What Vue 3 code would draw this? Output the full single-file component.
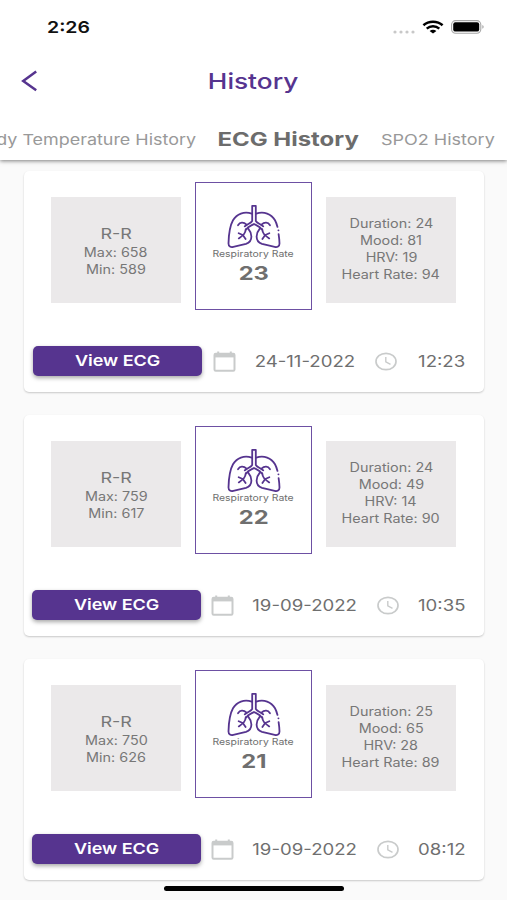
<script setup>
const records = [
  { id: 1, max: 658, min: 589, rate: 23, duration: 24, mood: 81, hrv: 19, heart: 94, date: '24-11-2022', time: '12:23' },
  { id: 2, max: 759, min: 617, rate: 22, duration: 24, mood: 49, hrv: 14, heart: 90, date: '19-09-2022', time: '10:35' },
  { id: 3, max: 750, min: 626, rate: 21, duration: 25, mood: 65, hrv: 28, heart: 89, date: '19-09-2022', time: '08:12' },
]
</script>

<template>
  <div class="screen">
    <header class="top">
      <div class="status">
        <span class="clock wide">2:26</span>
        <div class="signals">
          <svg class="dots" width="24" height="4" viewBox="0 0 24 4"><g fill="#c8c8c8"><circle cx="3" cy="2" r="1.6" /><circle cx="9" cy="2" r="1.6" /><circle cx="15" cy="2" r="1.6" /><circle cx="21" cy="2" r="1.6" /></g></svg>
          <svg class="wifi" width="22" height="14" viewBox="0 0 22 14" fill="none" stroke="#000" stroke-width="2.5">
            <path d="M1.4 5.2C6.7.5 15.3.5 20.6 5.2" />
            <path d="M4.7 8.6c3.6-3.1 9-3.1 12.6 0" />
            <path d="M7.6 10.9c2-1.7 4.8-1.7 6.8 0L11 13.5z" fill="#000" stroke="none" />
          </svg>
          <svg width="34" height="14" viewBox="0 0 34 14">
            <rect x=".6" y=".6" width="29.2" height="12.6" rx="4" fill="none" stroke="#a6a6a6" stroke-width="1.1" />
            <rect x="2.2" y="2.2" width="26" height="9.4" rx="2.2" />
            <path d="M31.4 5.1c1.6.4 1.6 3.2 0 3.6z" fill="#a0a0a0" />
          </svg>
        </div>
      </div>
      <div class="titlebar">
        <svg class="back" width="18" height="22" viewBox="0 0 18 22" fill="none" stroke="#56348f" stroke-width="2.5"><path d="M15.2 1.4 2.2 11l13 9.3" /></svg>
        <h1 class="title"><span class="wide">History</span></h1>
      </div>
      <nav class="tabs">
        <a class="tab tab-left"><span class="wide">Body Temperature History</span></a>
        <a class="tab tab-active"><span class="wide">ECG History</span></a>
        <a class="tab tab-right"><span class="wide">SPO2 History</span></a>
      </nav>
    </header>

    <main class="list">
      <article v-for="r in records" :key="r.id" class="card">
        <div class="metrics">
          <div class="panel">
            <span class="rr wide">R-R</span>
            <span class="line wide">Max: {{ r.max }}</span>
            <span class="line wide">Min: {{ r.min }}</span>
          </div>
          <div class="breath">
            <svg class="lungs" width="54" height="45" viewBox="0 0 54 45" fill="none" stroke="#56348f" stroke-width="1.8" stroke-linecap="round" stroke-linejoin="round">
              <path d="M25.2 17V1.8h3.6V17M25.2 17c-1.6 2.6-5.2 3-7.4 5.4M28.8 17c1.6 2.6 5.2 3 7.4 5.4" />
              <path d="M19.4 25.2c1.8-3.2 4.6-3.4 7.6-5.2 3 1.8 5.8 2 7.6 5.2" />
              <path d="M24.8 9.6C17 7.2 9.8 9.8 6 16.3 3 21.6 1.7 31 1.5 39.5c0 3 2.2 4 4.8 3.4L19 39.8c4.2-1.3 5.4-3.5 5.4-7.3 0-3.2-1.2-5.4-3.2-7.8" />
              <path d="M29.2 9.6C37 7.2 44.3 9.8 48 16.3c1 1.8 1.8 4.1 2.5 6.6M51.6 30.2c.5 3.1.8 6.3.9 9.3 0 3-2.2 4-4.8 3.4L35 39.8c-4.2-1.3-5.4-3.5-5.4-7.3 0-3.2 1.2-5.4 3.2-7.8M51.4 26.3h.1" />
              <path d="M11 21.2c2-3 5.4-3.4 8.6-.6M43 21.2c-2-3-5.4-3.4-8.6-.6" />
              <path d="M18.8 25.2c-.4 4.4-2.4 6-7 9.2M15.8 31l2.8 4M15.8 31l-4.1-1.8M35.2 25.2c.4 4.4 2.4 6 7 9.2M38.2 31l-2.8 4M38.2 31l4.1-1.8" />
            </svg>
            <span class="caption wide">Respiratory Rate</span>
            <span class="rate wide">{{ r.rate }}</span>
          </div>
          <div class="panel panel-right">
            <span class="line wide">Duration: {{ r.duration }}</span>
            <span class="line wide">Mood: {{ r.mood }}</span>
            <span class="line wide">HRV: {{ r.hrv }}</span>
            <span class="line wide">Heart Rate: {{ r.heart }}</span>
          </div>
        </div>
        <div class="footer">
          <button class="view"><span class="wide">View ECG</span></button>
          <svg class="calendar" width="23" height="21" viewBox="0 0 23 21" fill="none" stroke="#c9cbcb" stroke-width="2">
            <rect x="1.5" y="2.8" width="20" height="17" rx="1.2" /><path d="M2 4.6h19" stroke-width="3.6" /><path d="M5.2.5v3M17.8.5v3" />
          </svg>
          <span class="date"><span class="wide">{{ r.date }}</span></span>
          <svg class="timer" width="22" height="19" viewBox="0 0 22 18" fill="none" stroke="#c9cbcb" stroke-width="1.7">
            <ellipse cx="11" cy="9" rx="10" ry="8.2" /><path d="M10.8 4.4v4.9l4.7 2.6" stroke-width="1.4" />
          </svg>
          <span class="time"><span class="wide">{{ r.time }}</span></span>
        </div>
      </article>
    </main>
    <div class="home"></div>
  </div>
</template>

<style>
body { background: #fafafa; overflow: hidden; }
</style>

<style scoped>
.screen {
  position: relative;
  width: 507px;
  height: 900px;
  overflow: hidden;
  background: #fafafa;
  color: #6f6f6f;
  font-family: Inter, "Liberation Sans", sans-serif;
}
.wide { display: inline-block; white-space: nowrap; transform: scaleX(1.2); }
.top {
  position: relative;
  height: 160px;
  background: #fff;
  box-shadow: 0 1px 4px rgba(0, 0, 0, 0.5);
}
.status {
  display: flex;
  justify-content: space-between;
  height: 54px;
  padding: 0 22px 0 47px;
  box-sizing: border-box;
}
.clock {
  margin-top: 17px;
  color: #111;
  font-size: 16.5px;
  font-weight: 600;
  line-height: 21px;
  transform: scaleX(1.18);
  transform-origin: left;
}
.signals { display: flex; height: 14px; margin-top: 20px; }
.dots { margin: 10px 1px 0 -1px; }
.wifi { margin: 0 7px 0 5px; }
.titlebar {
  display: grid;
  grid-template-columns: 60px 1fr 60px;
  align-items: center;
  height: 54px;
}
.back { margin-left: 21px; }
.title {
  margin: 0;
  color: #56348f;
  font-size: 21.5px;
  font-weight: 500;
  line-height: 28px;
  text-align: center;
}
.title .wide { transform: scaleX(1.22); }
.tabs {
  display: grid;
  grid-template-columns: 196px 185px 126px;
  align-items: center;
  height: 62px;
  padding-top: 1px;
  line-height: 24px;
}
.tab { color: #999; font-size: 15px; }
.tab-left { display: flex; justify-content: flex-end; }
.tab-left .wide { transform: scaleX(1.195); transform-origin: right; }
.tab-active { color: #6c6c6c; font-size: 19px; font-weight: 700; text-align: center; }
.tab-active .wide { transform: scaleX(1.26); }
.tab-right .wide { transform-origin: left; }
.list {
  display: flex;
  flex-direction: column;
  gap: 23px;
  padding: 11px 23px 0 24px;
}
.card {
  height: 221px;
  box-sizing: border-box;
  padding-top: 11px;
  border-radius: 5px;
  background: #fff;
  box-shadow: 0 1px 2px rgba(0, 0, 0, 0.2);
}
.metrics {
  display: grid;
  grid-template-columns: 130px 117px 130px;
  align-items: center;
  gap: 14px;
  height: 128px;
  padding-left: 27px;
}
.panel {
  display: flex;
  flex-direction: column;
  align-items: center;
  justify-content: center;
  height: 106px;
  margin-top: 8px;
  padding-top: 1px;
  box-sizing: border-box;
  background: #ebe9ea;
  color: #777;
  font-size: 12.5px;
  line-height: 17px;
}
.panel .line { transform: scaleX(1.15); }
.panel-right { padding-bottom: 3px; }
.rr { font-size: 15px; line-height: 20px; }
.breath {
  display: flex;
  flex-direction: column;
  align-items: center;
  height: 128px;
  box-sizing: border-box;
  padding-top: 21px;
  border: 1.5px solid #6d50a3;
}
.caption { margin-top: -1px; font-size: 9px; line-height: 11px; transform: scaleX(1.16); }
.rate { margin-top: 2px; font-size: 18.5px; font-weight: 700; line-height: 24px; transform: scaleX(1.28); }
.footer {
  display: grid;
  grid-template-columns: 179.5px 40.5px 122px 43px 48px;
  align-items: center;
  height: 30px;
  margin: 36px 0 0 9px;
}
.card:nth-child(n + 2) .footer {
  grid-template-columns: 179px 42px 124px 41px 48px;
  margin-left: 8px;
}
.view {
  width: 169px;
  height: 30px;
  padding: 0;
  border: 0;
  border-radius: 5px;
  background: #56348f;
  color: #fff;
  font: 600 15px/30px Inter, "Liberation Sans", sans-serif;
  box-shadow: 0 2px 4px rgba(0, 0, 0, 0.35);
}
.date, .time { font-size: 15.5px; text-align: center; }
.date { width: 104px; }
.home {
  position: absolute;
  left: 164px;
  top: 886px;
  width: 180px;
  height: 5px;
  border-radius: 3px;
  background: #000;
}
</style>
